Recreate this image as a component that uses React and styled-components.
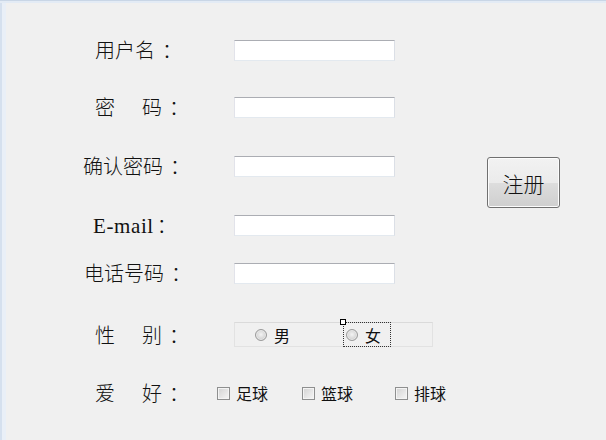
import React from 'react';
import styled, { createGlobalStyle } from 'styled-components';

const Global = createGlobalStyle`
  html, body { margin: 0; padding: 0; background: #f0f0f0; }
  * { box-sizing: border-box; }
`;

const cjk = '"Noto Sans CJK SC", "Noto Sans", sans-serif';

const Window = styled.div`
  position: relative;
  width: 606px;
  height: 440px;
  background: #f0f0f0;
  box-shadow: inset 0 1px #c9d6e6, inset 0 3px #e3ebf5, inset 2px 0 #d5e0ee, inset 6px 0 #e9eff7;
  display: flex;
  font-family: ${cjk};
  color: #111;
`;

const Form = styled.div`
  width: 470px;
  padding-top: 38px;
  display: flex;
  flex-direction: column;
`;

const Row = styled.div`
  display: grid;
  grid-template-columns: ${p => p.$col || 234}px auto;
  align-items: center;
  height: 24px;
  margin-top: ${p => p.$top || 0}px;
`;

const Label = styled.div`
  padding-left: ${p => p.$x}px;
  font-size: 20px;
  font-weight: 300;
  line-height: 24px;
  white-space: pre;
`;

const Latin = styled.span`
  font-family: "Liberation Serif", serif;
  font-size: 21px;
  letter-spacing: 0.6px;
`;

const Colon = styled.span`
  margin-left: ${p => p.$ml ?? 7}px;
`;

const Gap = styled.span`
  display: inline-block;
  width: ${p => p.$w}px;
`;

const TextBox = styled.input`
  width: 161px;
  height: 21px;
  margin: 0;
  background: #fff;
  border: 1px solid;
  border-color: #abadb3 #dbdfe6 #e3e9ef #e2e3ea;
  outline: none;
`;

const RadioPanel = styled.div`
  position: relative;
  width: 199px;
  height: 25px;
  display: flex;
  align-items: center;
  padding-left: 18px;
  border: 1px solid #e2e2e2;
  border-top-color: #dadada;
  background: #f0f0f0;
`;

const RadioItem = styled.label`
  position: relative;
  display: flex;
  align-items: center;
  gap: 7px;
  width: ${p => p.$w}px;
  height: 25px;
  padding-left: ${p => p.$pl}px;
  font-size: 16px;
  line-height: 20px;
  outline: ${p => (p.$focus ? '1px dotted #333' : 'none')};
  outline-offset: -1px;
`;

const RadioDot = styled.span`
  width: 12px;
  height: 12px;
  border-radius: 50%;
  border: 1px solid #9a9a9a;
  background: radial-gradient(circle at 50% 45%, #f4f4f4 0%, #d8d8d8 55%, #c4c4c4 100%);
  box-shadow: inset 0 0 0 1px #eaeaea;
`;

const Handle = styled.span`
  position: absolute;
  left: -3px;
  top: -3px;
  width: 6px;
  height: 6px;
  background: #fff;
  border: 1px solid #000;
`;

const Checks = styled.div`
  display: flex;
  align-items: center;
`;

const CheckItem = styled.label`
  display: flex;
  align-items: center;
  gap: 6px;
  width: ${p => p.$w}px;
  font-size: 16px;
  line-height: 20px;
`;

const Box = styled.span`
  width: 13px;
  height: 13px;
  border: 1px solid #8e8f8f;
  background: linear-gradient(135deg, #d2d2d2 0%, #e8e8e8 60%, #f6f6f6 100%);
  box-shadow: inset 0 0 0 1px #f4f4f4;
`;

const Side = styled.div`
  padding-top: 157px;
  padding-left: 17px;
`;

const Button = styled.button`
  width: 73px;
  height: 51px;
  padding: 0;
  font-family: ${cjk};
  font-size: 21px;
  font-weight: 300;
  color: #111;
  border: 1px solid #707070;
  border-radius: 3px;
  background: linear-gradient(#f2f2f2 0%, #ebebeb 50%, #dddddd 51%, #cfcfcf 100%);
  box-shadow: inset 0 0 0 1px #fcfcfc;
`;

const fields = [
  { label: '用户名', x: 95, top: 0 },
  { label: ['密', 27, '码'], x: 95, top: 33 },
  { label: '确认密码', x: 83, top: 35 },
  { label: 'mail', x: 93, top: 35 },
  { label: '电话号码', x: 84, top: 24 },
];

function FieldLabel({ label, x }) {
  if (label === 'mail') {
    return <Label $x={x}><Latin>E-mail</Latin><Colon $ml={3}>：</Colon></Label>;
  }
  if (Array.isArray(label)) {
    return <Label $x={x}>{label[0]}<Gap $w={label[1]} />{label[2]}<Colon>：</Colon></Label>;
  }
  return <Label $x={x}>{label}<Colon>：</Colon></Label>;
}

export default function App() {
  return (
    <>
      <Global />
      <Window>
        <Form>
          {fields.map((f, i) => (
            <Row key={i} $top={f.top}>
              <FieldLabel label={f.label} x={f.x} />
              <TextBox type={i === 1 || i === 2 ? 'password' : 'text'} />
            </Row>
          ))}
          <Row $top={37}>
            <Label $x={95}>性<Gap $w={27} />别<Colon>：</Colon></Label>
            <RadioPanel>
              <RadioItem $w={90} $pl={2}><RadioDot />男</RadioItem>
              <RadioItem $w={48} $pl={3} $focus><Handle /><RadioDot />女</RadioItem>
            </RadioPanel>
          </Row>
          <Row $top={35} $col={217}>
            <Label $x={95}>爱<Gap $w={27} />好<Colon>：</Colon></Label>
            <Checks>
              <CheckItem $w={85}><Box />足球</CheckItem>
              <CheckItem $w={93}><Box />篮球</CheckItem>
              <CheckItem $w={60}><Box />排球</CheckItem>
            </Checks>
          </Row>
        </Form>
        <Side>
          <Button>注册</Button>
        </Side>
      </Window>
    </>
  );
}
